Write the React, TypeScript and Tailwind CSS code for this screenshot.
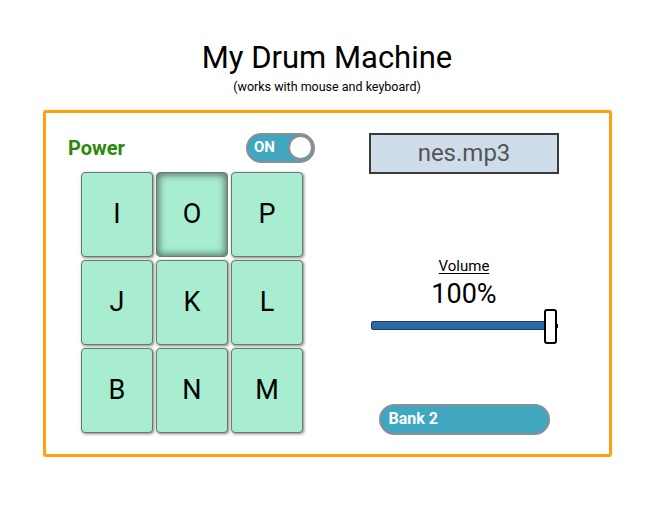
import { type FC } from 'react'

const pads = ['I', 'O', 'P', 'J', 'K', 'L', 'B', 'N', 'M']

const Pad: FC<{ label: string; pressed?: boolean }> = ({ label, pressed }) => (
  <div
    className={`h-[85px] w-[72px] flex items-center justify-center rounded-[4px] border border-[#6d7772] bg-[#a8edd0] text-[27px] leading-none text-black ${
      pressed
        ? 'shadow-[inset_0_0_7px_2px_rgba(0,0,0,0.5)]'
        : 'shadow-[1px_1px_3px_rgba(0,0,0,0.5)]'
    }`}
  >
    {label}
  </div>
)

const App: FC = () => {
  return (
    <div className="w-[660px] h-[510px] bg-white font-['Roboto',sans-serif] text-black">
      <h1 className="pt-[42px] text-center text-[31px] leading-none h-[73px] ml-[-6px]">
        My Drum Machine
      </h1>
      <p className="mt-[8px] text-center text-[12.5px] leading-none ml-[-6px]">
        (works with mouse and keyboard)
      </p>

      <div className="mt-[16px] ml-[43px] w-[569px] h-[347px] border-[3px] border-[#ffa010] rounded-[3px] flex">
        {/* left: power + pads */}
        <div className="w-[323px] pl-[22px] pt-[20px]">
          <div className="flex items-center justify-between w-[247px] h-[30px]">
            <span className="text-[20px] font-bold leading-none text-[#2a880c]">Power</span>
            <div className="w-[69px] h-[30px] rounded-full border-2 border-[#8a8f92] bg-[#41a6c0] flex items-center justify-between pl-[6px] pr-0">
              <span className="text-white font-bold text-[15px] leading-none">ON</span>
              <span className="w-[25px] h-[25px] rounded-full bg-white border-2 border-[#8a8f92]" />
            </div>
          </div>
          <div className="mt-[9px] ml-[13px] grid grid-cols-[72px_72px_72px] gap-x-[3px] gap-y-[3px]">
            {pads.map((p) => (
              <Pad key={p} label={p} pressed={p === 'O'} />
            ))}
          </div>
        </div>

        {/* right: display, volume, bank */}
        <div className="w-[190px] pt-[20px] flex flex-col items-center">
          <div className="w-[190px] h-[41px] bg-[#cfdcea] border-2 border-[#3a3a3a] flex items-center justify-center text-[24px] text-[#555]">
            nes.mp3
          </div>
          <div className="mt-[85px] text-[15px] leading-none underline underline-offset-2">Volume</div>
          <div className="mt-[7px] text-[27px] leading-none">100%</div>
          <div className="relative mt-[1px] w-[187px] h-[35px]">
            <div className="absolute left-0 right-[2px] top-[12px] h-[9px] bg-[#2b6aa6] border border-[#1f3e5e] rounded-[2px]" />
            <div className="absolute right-0 top-[15px] w-[3px] h-[4px] bg-black" />
            <div className="absolute right-[1px] top-0 w-[13px] h-[35px] bg-white border-2 border-black rounded-[3px]" />
          </div>
          <div className="mt-[60px] w-[171px] h-[31px] rounded-full border-2 border-[#8a8f92] bg-[#41a6c0] flex items-center pl-[8px] text-white font-bold text-[16px] leading-none">
            Bank 2
          </div>
        </div>
      </div>
    </div>
  )
}

export default App
